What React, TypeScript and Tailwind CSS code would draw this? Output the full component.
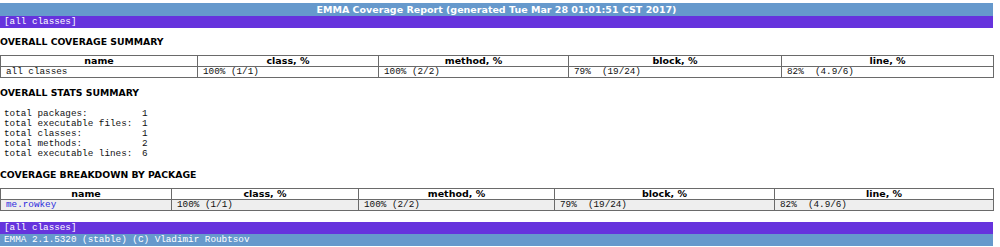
import React from 'react';

const sans = { fontFamily: '"DejaVu Sans", Verdana, sans-serif' };
const mono = { fontFamily: '"Liberation Mono", "Courier New", monospace' };

type Row = { name: string; link?: boolean; cls: string; method: string; block: string; line: string };

const Bar = ({ kind, children, center }: { kind: 'tl' | 'nv'; children: React.ReactNode; center?: boolean }) => (
  <div
    className={`${kind === 'tl' ? 'bg-[#6699cc]' : 'bg-[#6633dd]'} text-white h-[12px] leading-[12px] px-[4px] ${center ? 'text-center font-bold text-[9.5px] h-[13px] leading-[13px]' : 'text-[9.3px]'}`}
    style={center ? sans : mono}
  >
    {children}
  </div>
);

const Heading = ({ children, className }: { children: React.ReactNode; className?: string }) => (
  <h2 className={`font-bold text-[9.3px] leading-[12px] text-black ${className ?? ''}`} style={sans}>
    {children}
  </h2>
);

const CoverageTable = ({ widths, row, shaded }: { widths: number[]; row: Row; shaded?: boolean }) => {
  const heads = ['name', 'class, %', 'method, %', 'block, %', 'line, %'];
  const cells = [row.name, row.cls, row.method, row.block, row.line];
  return (
    <table className="table-fixed border-collapse w-[993px] border border-[#6a6a6a]">
      <colgroup>
        {widths.map((w, i) => (
          <col key={i} style={{ width: w }} />
        ))}
      </colgroup>
      <thead>
        <tr>
          {heads.map((h) => (
            <th
              key={h}
              className="border border-[#6a6a6a] h-[11px] p-0 text-[9.5px] leading-[10px] font-bold text-black text-center"
              style={sans}
            >
              {h}
            </th>
          ))}
        </tr>
      </thead>
      <tbody>
        <tr className={shaded ? 'bg-[#eeeeee]' : 'bg-white'}>
          {cells.map((c, i) => (
            <td
              key={i}
              className={`border-r border-[#6a6a6a] h-[11px] py-0 pl-[5px] text-[9.3px] leading-[10px] whitespace-pre ${
                i === 0 && row.link ? 'text-[#2b2bdd]' : 'text-[#111]'
              }`}
              style={mono}
            >
              {c}
            </td>
          ))}
        </tr>
      </tbody>
    </table>
  );
};

const stats: [string, string][] = [
  ['total packages:', '1'],
  ['total executable files:', '1'],
  ['total classes:', '1'],
  ['total methods:', '2'],
  ['total executable lines:', '6'],
];

export default function App() {
  return (
    <div className="w-[1000px] h-[247px] bg-white pt-[3px] overflow-hidden">
      <div className="w-[993px]">
        <Bar kind="tl" center>
          EMMA Coverage Report (generated Tue Mar 28 01:01:51 CST 2017)
        </Bar>
        <Bar kind="nv">[all classes]</Bar>

        <Heading className="mt-[8px]">OVERALL COVERAGE SUMMARY</Heading>
        <div className="mt-[7px]">
          <CoverageTable
            widths={[197, 181, 190, 213, 212]}
            row={{ name: 'all classes', cls: '100% (1/1)', method: '100% (2/2)', block: '79%  (19/24)', line: '82%  (4.9/6)' }}
          />
        </div>

        <Heading className="mt-[9px]">OVERALL STATS SUMMARY</Heading>
        <div className="mt-[10px] pl-[4px] text-[9.3px] leading-[10px] text-[#111]" style={mono}>
          {stats.map(([k, v]) => (
            <div key={k} className="grid grid-cols-[138px_auto]">
              <span>{k}</span>
              <span>{v}</span>
            </div>
          ))}
        </div>

        <Heading className="mt-[10px]">COVERAGE BREAKDOWN BY PACKAGE</Heading>
        <div className="mt-[7px]">
          <CoverageTable
            widths={[171, 187, 196, 220, 219]}
            shaded
            row={{ name: 'me.rowkey', link: true, cls: '100% (1/1)', method: '100% (2/2)', block: '79%  (19/24)', line: '82%  (4.9/6)' }}
          />
        </div>

        <div className="mt-[11px]">
          <Bar kind="nv">[all classes]</Bar>
          <Bar kind="tl">EMMA 2.1.5320 (stable) (C) Vladimir Roubtsov</Bar>
        </div>
      </div>
    </div>
  );
}
